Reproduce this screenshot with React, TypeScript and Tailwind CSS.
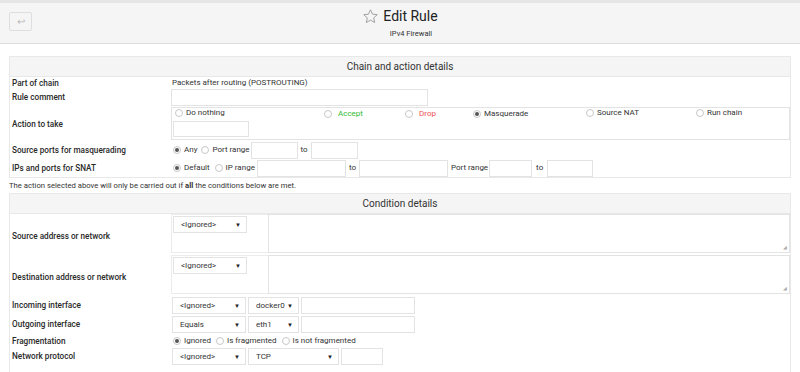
import React from 'react';

function Radio({ checked = false, label, color = 'text-[#333]' }: { checked?: boolean; label?: string; color?: string }) {
  return (
    <span className="inline-flex items-center gap-[3px]">
      <span className="w-[8px] h-[8px] rounded-full border border-[#c8c8c8] bg-white flex items-center justify-center">
        {checked && <span className="w-[4px] h-[4px] rounded-full bg-[#555]" />}
      </span>
      {label && <span className={color}>{label}</span>}
    </span>
  );
}

function Input({ w }: { w: string }) {
  return <span className={`${w} h-[17px] border border-[#e3e3e3] bg-white block shrink-0`} />;
}

function Select({ value, w }: { value: string; w: string }) {
  return (
    <span className={`${w} h-[17px] border border-[#e3e3e3] bg-white flex items-center justify-between pl-[7px] pr-[5px] shrink-0`}>
      <span>{value}</span>
      <span className="text-[6px] text-[#222]">▼</span>
    </span>
  );
}

function Row({ label, h, children }: { label: string; h: string; children?: React.ReactNode }) {
  return (
    <div className={`flex ${h}`}>
      <div className="w-[161px] shrink-0 pl-[2px] flex items-center font-medium text-[8.2px] text-[#2a2a2a]">{label}</div>
      <div className="flex-1 flex items-center">{children}</div>
    </div>
  );
}

function PanelHead({ title }: { title: string }) {
  return (
    <div className="h-[20px] bg-[#f5f5f5] border-b border-[#e8e8e8] flex items-center justify-center text-[10px] text-[#333]">
      {title}
    </div>
  );
}

function AddrRow({ label }: { label: string }) {
  return (
    <div className="flex h-[41px]">
      <div className="w-[161px] shrink-0 pl-[2px] flex items-center pt-[4px] font-medium text-[8.2px] text-[#2a2a2a]">{label}</div>
      <div className="flex-1 flex pb-[2px]">
        <div className="w-[97px] border border-[#ececec] border-r-0 pl-[1px] pt-[1px]">
          <Select value="<Ignored>" w="w-[74px]" />
        </div>
        <div className="flex-1 border border-[#e3e3e3] relative">
          <span className="absolute right-[2px] bottom-[2px] text-[5px] text-[#aaa] leading-none">◢</span>
        </div>
      </div>
    </div>
  );
}

export default function App() {
  return (
    <div
      className="w-[800px] h-[372px] overflow-hidden bg-white text-[8px] text-[#333]"
      style={{ fontFamily: 'Roboto, "Liberation Sans", sans-serif' }}
    >
      <div className="h-[3px] bg-[#e6e6e6]" />
      <div className="h-[41px] bg-[#f5f5f5] border-b border-[#dcdcdc] relative flex flex-col items-center">
        <div className="absolute left-[9px] top-[9px] w-[23px] h-[19px] border border-[#dedede] rounded-[2px] flex items-center justify-center text-[#bbb] text-[10px]">
          ↩
        </div>
        <div className="flex items-center gap-[4px] mt-[4px]">
          <svg width="17" height="17" viewBox="0 0 24 24" fill="none" stroke="#9a9a9a" strokeWidth="1.3" strokeLinejoin="round">
            <path d="M12 2.5l2.9 6.2 6.6.7-5 4.5 1.4 6.6L12 17.1l-5.9 3.4 1.4-6.6-5-4.5 6.6-.7z" />
          </svg>
          <span className="text-[14px] text-[#222] leading-[18px]">Edit Rule</span>
        </div>
        <div className="text-[7.5px] text-[#333] ml-[22px] mt-[3px]">IPv4 Firewall</div>
      </div>

      <div className="px-[9px] pt-[12px]">
        <div className="border border-[#e8e8e8]">
          <PanelHead title="Chain and action details" />
          <Row label="Part of chain" h="h-[12px]">
            <span className="pl-[1px]">Packets after routing (POSTROUTING)</span>
          </Row>
          <Row label="Rule comment" h="h-[17px]">
            <Input w="w-[257px]" />
          </Row>
          <div className="flex h-[35px]">
            <div className="w-[161px] shrink-0 pl-[2px] flex items-center pt-[2px] font-medium text-[8.2px] text-[#2a2a2a]">Action to take</div>
            <div className="flex-1 py-[1px]">
              <div className="h-full border border-[#e3e3e3] pl-[1px]">
                <div className="flex h-[12px] items-center pl-[2px]">
                  <span className="w-[149px]"><Radio label="Do nothing" /></span>
                  <span className="w-[81px] flex items-center gap-[6px]"><Radio /><span className="text-[#33bb33]">Accept</span></span>
                  <span className="w-[68px] flex items-center gap-[6px]"><Radio /><span className="text-[#f05050]">Drop</span></span>
                  <span className="w-[113px]"><Radio checked label="Masquerade" /></span>
                  <span className="w-[110px]"><Radio label="Source NAT" /></span>
                  <span><Radio label="Run chain" /></span>
                </div>
                <div className="mt-[1px]"><span className="w-[76px] h-[16px] border border-[#e3e3e3] block" /></div>
              </div>
            </div>
          </div>
          <Row label="Source ports for masquerading" h="h-[18px]">
            <div className="flex items-center gap-[4px] pl-[2px]">
              <Radio checked label="Any" />
              <Radio label="Port range" />
            </div>
            <span className="ml-[1px]"><Input w="w-[47px]" /></span>
            <span className="ml-[3px] mr-[3px]">to</span>
            <Input w="w-[47px]" />
          </Row>
          <Row label="IPs and ports for SNAT" h="h-[18px]">
            <div className="flex items-center gap-[5px] pl-[2px]">
              <Radio checked label="Default" />
              <Radio label="IP range" />
            </div>
            <span className="ml-[2px]"><Input w="w-[89px]" /></span>
            <span className="ml-[3px] mr-[3px]">to</span>
            <Input w="w-[89px]" />
            <span className="ml-[3px] mr-[1px]">Port range</span>
            <Input w="w-[43px]" />
            <span className="ml-[4px] mr-[4px]">to</span>
            <Input w="w-[46px]" />
          </Row>
        </div>

        <div className="h-[15px] flex items-center text-[7.7px]">
          The action selected above will only be carried out if <b className="font-bold mx-[2px]">all</b> the conditions below are met.
        </div>

        <div className="border border-[#e8e8e8] h-[200px]">
          <PanelHead title="Condition details" />
          <AddrRow label="Source address or network" />
          <AddrRow label="Destination address or network" />
          <Row label="Incoming interface" h="h-[19px]">
            <div className="flex gap-[2px] pl-[1px]">
              <Select value="<Ignored>" w="w-[74px]" />
              <Select value="docker0" w="w-[51px]" />
              <Input w="w-[114px]" />
            </div>
          </Row>
          <Row label="Outgoing interface" h="h-[19px]">
            <div className="flex gap-[2px] pl-[1px]">
              <Select value="Equals" w="w-[74px]" />
              <Select value="eth1" w="w-[51px]" />
              <Input w="w-[114px]" />
            </div>
          </Row>
          <Row label="Fragmentation" h="h-[14px]">
            <div className="flex items-center gap-[5px] pl-[2px]">
              <Radio checked label="Ignored" />
              <Radio label="Is fragmented" />
              <Radio label="Is not fragmented" />
            </div>
          </Row>
          <Row label="Network protocol" h="h-[17px]">
            <div className="flex gap-[2px] pl-[1px]">
              <Select value="<Ignored>" w="w-[74px]" />
              <Select value="TCP" w="w-[91px]" />
              <Input w="w-[42px]" />
            </div>
          </Row>
        </div>
      </div>
    </div>
  );
}
